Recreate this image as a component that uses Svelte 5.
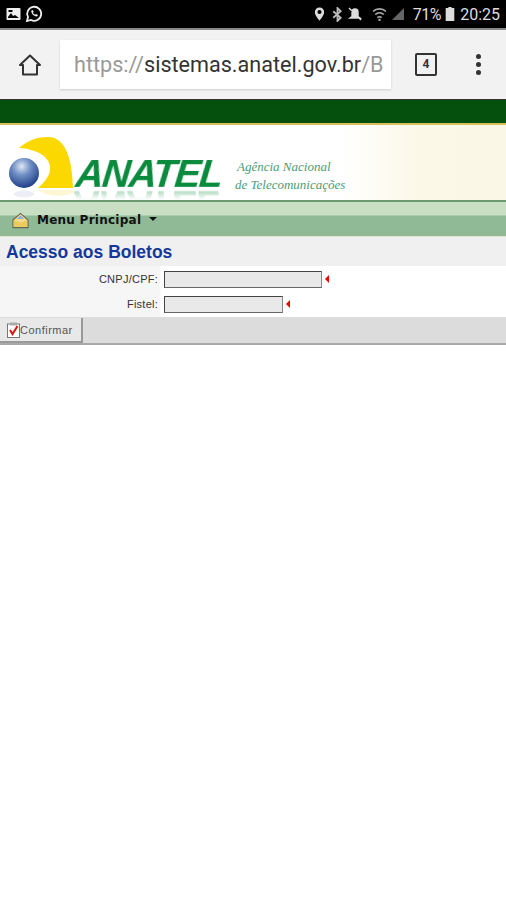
<script>
	let cnpj = '';
	let fistel = '';
</script>

<div class="page">
	<div class="statusbar">
		<div class="status-left">
			<svg width="16" height="14" viewBox="0 0 16 14"><rect x="0.5" y="1" width="14" height="12" rx="1" fill="#eee" /><path d="M2 10l3-4 2 3 2-1 4 3H2z" fill="#000" /><rect x="2.500" y="3" width="4" height="2" fill="#000" /></svg>
			<svg width="18" height="18" viewBox="0 0 18 18"><path d="M2 16l1-4a7 7 0 1 1 3 3z" fill="none" stroke="#eee" stroke-width="1.800" /><path d="M6.500 5.500c-1 2 2 6 5.500 6l1-1.500-2-1-1 .8c-1-.5-1.500-1-2-2l.7-1-1-1.800z" fill="#eee" /></svg>
		</div>
		<div class="status-right">
			<svg width="13" height="16" viewBox="0 0 14 16"><path d="M7 1a5 5 0 0 0-5 5c0 3.500 5 9 5 9s5-5.500 5-9a5 5 0 0 0-5-5zm0 7a2.200 2.200 0 1 1 0-4.400A2.200 2.200 0 0 1 7 8z" fill="#ddd" /></svg>
			<svg class="bt" width="11" height="15" viewBox="0 0 10 14"><path d="M1 4l7 6-3 3V1l3 3-7 6" fill="none" stroke="#bbb" stroke-width="1.700" /></svg>
			<svg class="mute" width="16" height="16" viewBox="0 0 16 16"><path d="M3 12l2-1.500V6a3 3 0 0 1 6 0v4.500l2 1.500zM2 2l12 12" fill="#ddd" stroke="#ddd" stroke-width="1.400" /></svg>
			<svg class="wifi" width="15" height="15" viewBox="0 0 14 14"><path d="M1 4a9 9 0 0 1 12 0M3 7a6 6 0 0 1 8 0M5 10a3 3 0 0 1 4 0" fill="none" stroke="#aaa" stroke-width="1.500" /><path d="M6 11h2v2H6z" fill="#aaa" /></svg>
			<svg class="signal" width="14" height="14" viewBox="0 0 14 14"><path d="M1 13L13 1v12z" fill="#666" /></svg>
			<span class="pct">71%</span>
			<svg class="battery" width="10" height="14" viewBox="0 0 8 13"><path d="M2.500 0h3v1H8v12H0V1h2.500z" fill="#ddd" /></svg>
			<span class="time">20:25</span>
		</div>
	</div>

	<div class="toolbar">
		<button class="iconbtn" aria-label="Home">
			<svg width="24" height="24" viewBox="0 0 24 24"><path d="M12 2.500L2 12h3v9.500h14V12h3z" fill="none" stroke="#333" stroke-width="2" stroke-linejoin="round" /></svg>
		</button>
		<div class="urlbar"><span class="dim">https://</span>sistemas.anatel.gov.br<span class="dim">/B</span></div>
		<div class="tabs">4</div>
		<div class="dots"><i></i><i></i><i></i></div>
	</div>

	<div class="darkband"></div>

	<header class="banner">
		<div class="logo">
			<svg class="mark" width="76" height="75" viewBox="0 0 76 75">
				<defs>
					<radialGradient id="ball" cx="0.42" cy="0.28" r="0.75">
						<stop offset="0" stop-color="#dfe6f2" />
						<stop offset="0.4" stop-color="#6f8fc4" />
						<stop offset="1" stop-color="#1c3a86" />
					</radialGradient>
				</defs>
				<path d="M19 23C28 15 38 12 48 12C64 12 72 30 73 63L38 63C47 55 51 48 50 41C48 30 35 24 19 23z" fill="#fbd800" />
				<circle cx="24" cy="48" r="15" fill="url(#ball)" />
				<ellipse cx="24" cy="69" rx="10" ry="3.500" fill="#d4d9e8" opacity="0.45" />
				<path d="M38 65h35v3c-10 4-26 4-35-3z" fill="#fbeea0" opacity="0.45" />
			</svg>
			<span class="wordmark">ANATEL</span>
		</div>
		<div class="agency">
			<span>Agência Nacional</span>
			<span>de Telecomunicações</span>
		</div>
	</header>

	<nav class="menu">
		<svg width="17" height="17" viewBox="0 0 18 17"><path d="M1 8l8-7 8 7v8H1z" fill="#f4dc8c" stroke="#665" stroke-width="1.200" /><path d="M5 7l4-4 4 4z" fill="#8fb0d8" /><path d="M2 8l7 3 7-3v7H2z" fill="#eccb5e" /></svg>
		<span>Menu Principal</span>
		<b class="caret"></b>
	</nav>

	<h1>Acesso aos Boletos</h1>

	<form class="fields">
		<label>
			<span>CNPJ/CPF:</span>
			<input class="long" bind:value={cnpj} />
			<b class="req"></b>
		</label>
		<label>
			<span>Fistel:</span>
			<input class="short" bind:value={fistel} />
			<b class="req"></b>
		</label>
	</form>

	<div class="actions">
		<button class="confirm" type="button">
			<svg width="13" height="16" viewBox="0 0 13 16"><rect x="0.500" y="2" width="12" height="13.500" fill="#fff" stroke="#777" /><rect x="3" y="0.500" width="7" height="3" fill="#aaa" /><path d="M3 8l2.500 4 5-8" fill="none" stroke="#d11" stroke-width="2" /></svg>
			Confirmar
		</button>
	</div>
</div>

<style>
	:global(body) {
		margin: 0;
		background: #fff;
	}
	.page {
		width: 506px;
		height: 900px;
		overflow: hidden;
		font-family: 'Liberation Sans', Arial, sans-serif;
	}
	.statusbar {
		height: 30px;
		background: #000;
		border-bottom: 2px solid #888;
		box-sizing: border-box;
		display: flex;
		justify-content: space-between;
		align-items: center;
		padding: 0 6px 0;
		color: #ddd;
	}
	.status-left,
	.status-right {
		display: flex;
		align-items: center;
		gap: 3px;
	}
	.status-right {
		gap: 4px;
	}
	.bt {
		margin-left: 2px;
	}
	.wifi {
		margin-left: 5px;
	}
	.pct {
		font: 16px Roboto, sans-serif;
		letter-spacing: -0.4px;
		margin-left: 4px;
	}
	.time {
		font: 16px Roboto, sans-serif;
		margin-left: 1px;
	}
	.toolbar {
		height: 70px;
		background: #f2f2f2;
		display: flex;
		align-items: center;
		box-sizing: border-box;
		border-bottom: 1px solid #333;
	}
	.iconbtn {
		width: 60px;
		padding: 0;
		border: 0;
		background: none;
		display: flex;
		justify-content: center;
	}
	.urlbar {
		width: 331px;
		height: 49px;
		background: #fff;
		box-shadow: 0 1px 2px #ccc;
		box-sizing: border-box;
		padding-left: 14px;
		font: 21.600px/49px Roboto, sans-serif;
		color: #333;
		overflow: hidden;
		white-space: nowrap;
	}
	.dim {
		color: #999;
	}
	.tabs {
		width: 18px;
		height: 19px;
		border: 2px solid #333;
		border-radius: 2px;
		margin-left: 24px;
		font: bold 12px/19px Roboto, sans-serif;
		text-align: center;
		color: #333;
	}
	.dots {
		margin-left: 39px;
		display: flex;
		flex-direction: column;
		gap: 3px;
	}
	.dots i {
		width: 5px;
		height: 5px;
		border-radius: 50%;
		background: #333;
	}
	.darkband {
		height: 25px;
		box-sizing: border-box;
		background: #04500c;
		border-bottom: 2px solid #d8c060;
	}
	.banner {
		height: 75px;
		background: linear-gradient(90deg, #fff 0, #fff 340px, #fbf8e8 420px, #fbf7e6 100%);
		display: flex;
		align-items: flex-start;
		overflow: hidden;
	}
	.logo {
		display: flex;
		align-items: flex-start;
		width: 230px;
		height: 75px;
		flex: none;
	}
	.mark {
		flex: none;
	}
	.wordmark {
		margin-top: 35px;
		font: italic bold 39px/28px 'Liberation Sans', sans-serif;
		color: #0a8a3c;
		letter-spacing: -1.600px;
		transform: skewX(-6deg);
		-webkit-box-reflect: below 2px linear-gradient(transparent 65%, rgba(255, 255, 255, 0.35));
	}
	.agency {
		display: flex;
		flex-direction: column;
		margin: 33px 0 0 5px;
		font: italic 13px/18px 'Liberation Serif', serif;
		color: #4a9d78;
	}
	.agency span:first-child {
		margin-left: 2px;
	}
	.menu {
		height: 37px;
		box-sizing: border-box;
		border-top: 2px solid #6c9a70;
		border-bottom: 1px solid #dfe6cc;
		background: linear-gradient(#c8dfc4 0, #c8dfc4 13px, #90b996 14px, #90b996 100%);
		display: flex;
		align-items: center;
		gap: 8px;
		padding: 2px 0 0 12px;
		font: bold 12px 'DejaVu Sans', sans-serif;
		color: #111;
		letter-spacing: 0.25px;
	}
	.caret {
		width: 0;
		height: 0;
		border: 4.500px solid transparent;
		border-top: 4.500px solid #111;
		border-bottom: 0;
		margin-top: -3px;
	}
	h1 {
		margin: 0;
		height: 29px;
		background: #f0f0f0;
		padding-left: 6px;
		font: bold 17.500px/31px 'Liberation Sans', sans-serif;
		color: #14389c;
	}
	.fields {
		background: linear-gradient(90deg, #f6f6f6 0, #f6f6f6 160px, #fff 161px);
		padding: 4px 0 4px;
		display: flex;
		flex-direction: column;
		gap: 7px;
	}
	label {
		display: flex;
		align-items: center;
		height: 18px;
		font-size: 11px;
		letter-spacing: 0.25px;
		color: #333;
	}
	label span {
		width: 158px;
		text-align: right;
		margin-right: 6px;
	}
	input {
		box-sizing: border-box;
		height: 17px;
		padding: 0;
		background: #e9e9e9;
		border: 1px solid #444;
		border-right-color: #888;
		border-bottom-color: #666;
	}
	.long {
		width: 158px;
	}
	.short {
		width: 119px;
	}
	.req {
		width: 0;
		height: 0;
		margin-left: 3px;
		border: 4px solid transparent;
		border-right: 4px solid #e00;
		border-left: 0;
	}
	.actions {
		height: 28px;
		box-sizing: border-box;
		background: #dcdcdc;
		border-bottom: 2px solid #aaa;
		padding-top: 1px;
	}
	.confirm {
		height: 25px;
		width: 83px;
		padding: 0 0 0 7px;
		display: flex;
		align-items: center;
		background: #e8e8e8;
		border: 0;
		border-right: 2px solid #999;
		border-bottom: 2px solid #999;
		font: 11px 'Liberation Sans', sans-serif;
		letter-spacing: 0.5px;
		color: #555;
	}
</style>
